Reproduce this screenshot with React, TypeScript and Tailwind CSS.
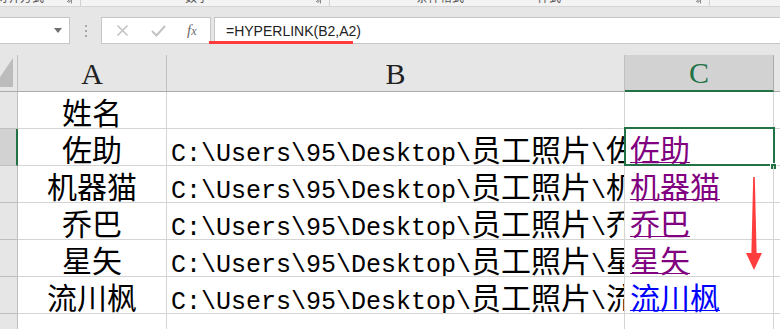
import React from "react";

const GRID = "border-[#d4d4d4]";

function Mixed({ text }: { text: string }) {
  const runs = text.match(/[\u4e00-\u9fff]+|[^\u4e00-\u9fff]+/g) || [];
  return (
    <>
      {runs.map((r, i) =>
        /[\u4e00-\u9fff]/.test(r) ? (
          <span key={i} className="font-['Noto_Sans_CJK_SC',sans-serif] text-[30px]">
            {r}
          </span>
        ) : (
          <span key={i} className="font-['Liberation_Mono',monospace] text-[25px]">
            {r}
          </span>
        )
      )}
    </>
  );
}

const rows: { a: string; b: string; c: string; visited: boolean }[] = [
  { a: "姓名", b: "", c: "", visited: true },
  { a: "佐助", b: "C:\\Users\\95\\Desktop\\员工照片\\佐助", c: "佐助", visited: true },
  { a: "机器猫", b: "C:\\Users\\95\\Desktop\\员工照片\\机器猫", c: "机器猫", visited: true },
  { a: "乔巴", b: "C:\\Users\\95\\Desktop\\员工照片\\乔巴", c: "乔巴", visited: true },
  { a: "星矢", b: "C:\\Users\\95\\Desktop\\员工照片\\星矢", c: "星矢", visited: true },
  { a: "流川枫", b: "C:\\Users\\95\\Desktop\\员工照片\\流川枫", c: "流川枫", visited: false },
  { a: "", b: "", c: "", visited: true },
];

function Launcher() {
  return (
    <svg width="7" height="7" viewBox="0 0 7 7" className="mt-[-3px]">
      <path d="M0.5 0.5h6v6" fill="none" stroke="#8a8a8a" strokeWidth="1" />
      <path d="M2 5l3-3M5 5V3M5 5H3" stroke="#8a8a8a" strokeWidth="1" />
    </svg>
  );
}

export default function App() {
  return (
    <div className="relative w-[780px] h-[329px] overflow-hidden bg-white select-none">
      {/* ribbon bottom */}
      <div className="h-[7px] bg-[#f3f3f3] border-b border-[#d5d5d5] overflow-hidden flex items-start text-[12px] text-[#555] font-['Noto_Sans_CJK_SC',sans-serif]">
        <div className="w-[81px] flex items-start justify-between pr-[8px] border-r border-[#d0d0d0] h-[6px]">
          <span className="mt-[-12px] ml-[-4px]">对齐方式</span>
          <Launcher />
        </div>
        <div className="w-[249px] flex items-start justify-between pr-[8px] pl-[104px] border-r border-[#d0d0d0] h-[6px]">
          <span className="mt-[-12px]">数字</span>
          <Launcher />
        </div>
        <div className="w-[380px] flex items-start justify-between pr-[8px] pl-[86px] border-r border-[#d0d0d0] h-[6px]">
          <span className="mt-[-12px]">条件格式</span>
          <span className="mt-[-12px] ml-[-60px]">样式</span>
          <Launcher />
        </div>
      </div>

      {/* formula band */}
      <div className="h-[48px] bg-[#e6e6e6] pt-[10px] flex items-start">
        <div className="w-[70px] h-[27px] bg-white border border-[#c6c6c6] border-l-0 flex items-center justify-end pr-[7px]">
          <svg width="8" height="5" viewBox="0 0 8 5">
            <path d="M0 0h8L4 5z" fill="#707070" />
          </svg>
        </div>
        <div className="w-[31px] h-[27px] flex flex-col items-center justify-center gap-[3px]">
          <div className="w-[2px] h-[2px] bg-[#a8a8a8]" />
          <div className="w-[2px] h-[2px] bg-[#a8a8a8]" />
          <div className="w-[2px] h-[2px] bg-[#a8a8a8]" />
        </div>
        <div className="w-[110px] h-[27px] bg-white border border-[#c6c6c6] flex items-center pl-[14px]">
          <svg width="13" height="13" viewBox="0 0 13 13">
            <path d="M1.5 1.5l10 10M11.5 1.5l-10 10" stroke="#c3c3c3" strokeWidth="1.6" />
          </svg>
          <svg width="15" height="13" viewBox="0 0 15 13" className="ml-[22px]">
            <path d="M1 7l4.5 4.5L14 2" fill="none" stroke="#c3c3c3" strokeWidth="2" />
          </svg>
          <span className="ml-[21px] font-['Liberation_Serif',serif] italic text-[15px] text-[#6a6a6a] leading-none">
            f<span className="text-[12px]">x</span>
          </span>
        </div>
        <div className="ml-[3px] flex-1 h-[27px] bg-white border border-[#c6c6c6] border-r-0 flex items-center pl-[11px]">
          <span className="font-['Liberation_Sans_Narrow','Liberation_Sans',sans-serif] text-[14px] text-[#222] leading-none">
            =HYPERLINK(B2,A2)
          </span>
        </div>
      </div>

      {/* red underline under formula */}
      <div className="absolute left-[209px] top-[41px] w-[144px] h-[3px] bg-[#ff3b3b]" />

      {/* header row */}
      <div className="flex h-[37px] bg-[#e6e6e6] border-b border-[#ababab]">
        <div className="w-[18px] border-r border-[#bfbfbf] relative overflow-hidden">
          <svg width="18" height="36" viewBox="0 0 18 36" className="absolute left-0 top-0">
            <polygon points="13,3 13,32 0,32 0,22" fill="#bcbcbc" />
          </svg>
        </div>
        <div className="w-[149px] border-r border-[#bfbfbf] flex items-center justify-center font-['Liberation_Serif',serif] text-[30px] text-[#222] leading-none pt-[1px]">
          A
        </div>
        <div className="w-[458px] border-r border-[#bfbfbf] flex items-center justify-center font-['Liberation_Serif',serif] text-[30px] text-[#222] leading-none pt-[1px]">
          B
        </div>
        <div className="w-[149px] bg-[#d2d2d2] border-r border-[#ababab] border-b-2 border-b-[#217346] mb-[-1px] flex items-center justify-center font-['Liberation_Serif',serif] text-[30px] text-[#217346] leading-none pt-[1px]">
          C
        </div>
        <div className="flex-1" />
      </div>

      {/* data rows */}
      {rows.map((r, i) => {
        const selected = i === 1;
        return (
          <div key={i} className="flex h-[37px]">
            <div
              className={
                selected
                  ? "w-[18px] bg-[#d2d2d2] border-b border-[#bfbfbf] border-r-2 border-r-[#217346]"
                  : "w-[18px] bg-[#e6e6e6] border-b border-r border-[#bfbfbf]"
              }
            />
            <div
              className={`w-[149px] border-b border-r ${GRID} text-center whitespace-nowrap overflow-hidden leading-[36px] pt-[1px] text-black font-['Noto_Sans_CJK_SC',sans-serif] text-[30px]`}
            >
              {r.a}
            </div>
            <div
              className={`w-[458px] border-b border-r ${GRID} whitespace-nowrap overflow-hidden leading-[36px] pt-[1px] pl-[4px] text-black font-['Noto_Sans_CJK_SC',sans-serif] text-[30px]`}
            >
              <Mixed text={r.b} />
            </div>
            <div
              className={`relative w-[149px] border-b border-r ${GRID} whitespace-nowrap leading-[36px] pt-[1px] pl-[5px] font-['Noto_Sans_CJK_SC',sans-serif] text-[30px]`}
            >
              <span
                className={`underline decoration-1 underline-offset-[1px] ${
                  r.visited ? "text-[#800080]" : "text-[#0000ff]"
                }`}
              >
                {r.c}
              </span>
              {selected && (
                <>
                  <div className="absolute left-[-1px] top-[-2px] w-[151px] h-[39px] border-2 border-[#217346] pointer-events-none" />
                  <div className="absolute left-[145px] top-[34px] w-[7px] h-[7px] bg-[#217346] border border-white" />
                </>
              )}
            </div>
            <div className={`flex-1 border-b ${GRID}`} />
          </div>
        );
      })}

      {/* red arrow */}
      <svg
        width="20"
        height="96"
        viewBox="0 0 20 96"
        className="absolute left-[744px] top-[177px]"
      >
        <polygon points="9.2,0 10.8,0 12.6,76 7.4,76" fill="#ff3d3d" />
        <polygon points="2,76 18,76 10,93" fill="#ff3d3d" />
      </svg>
    </div>
  );
}
